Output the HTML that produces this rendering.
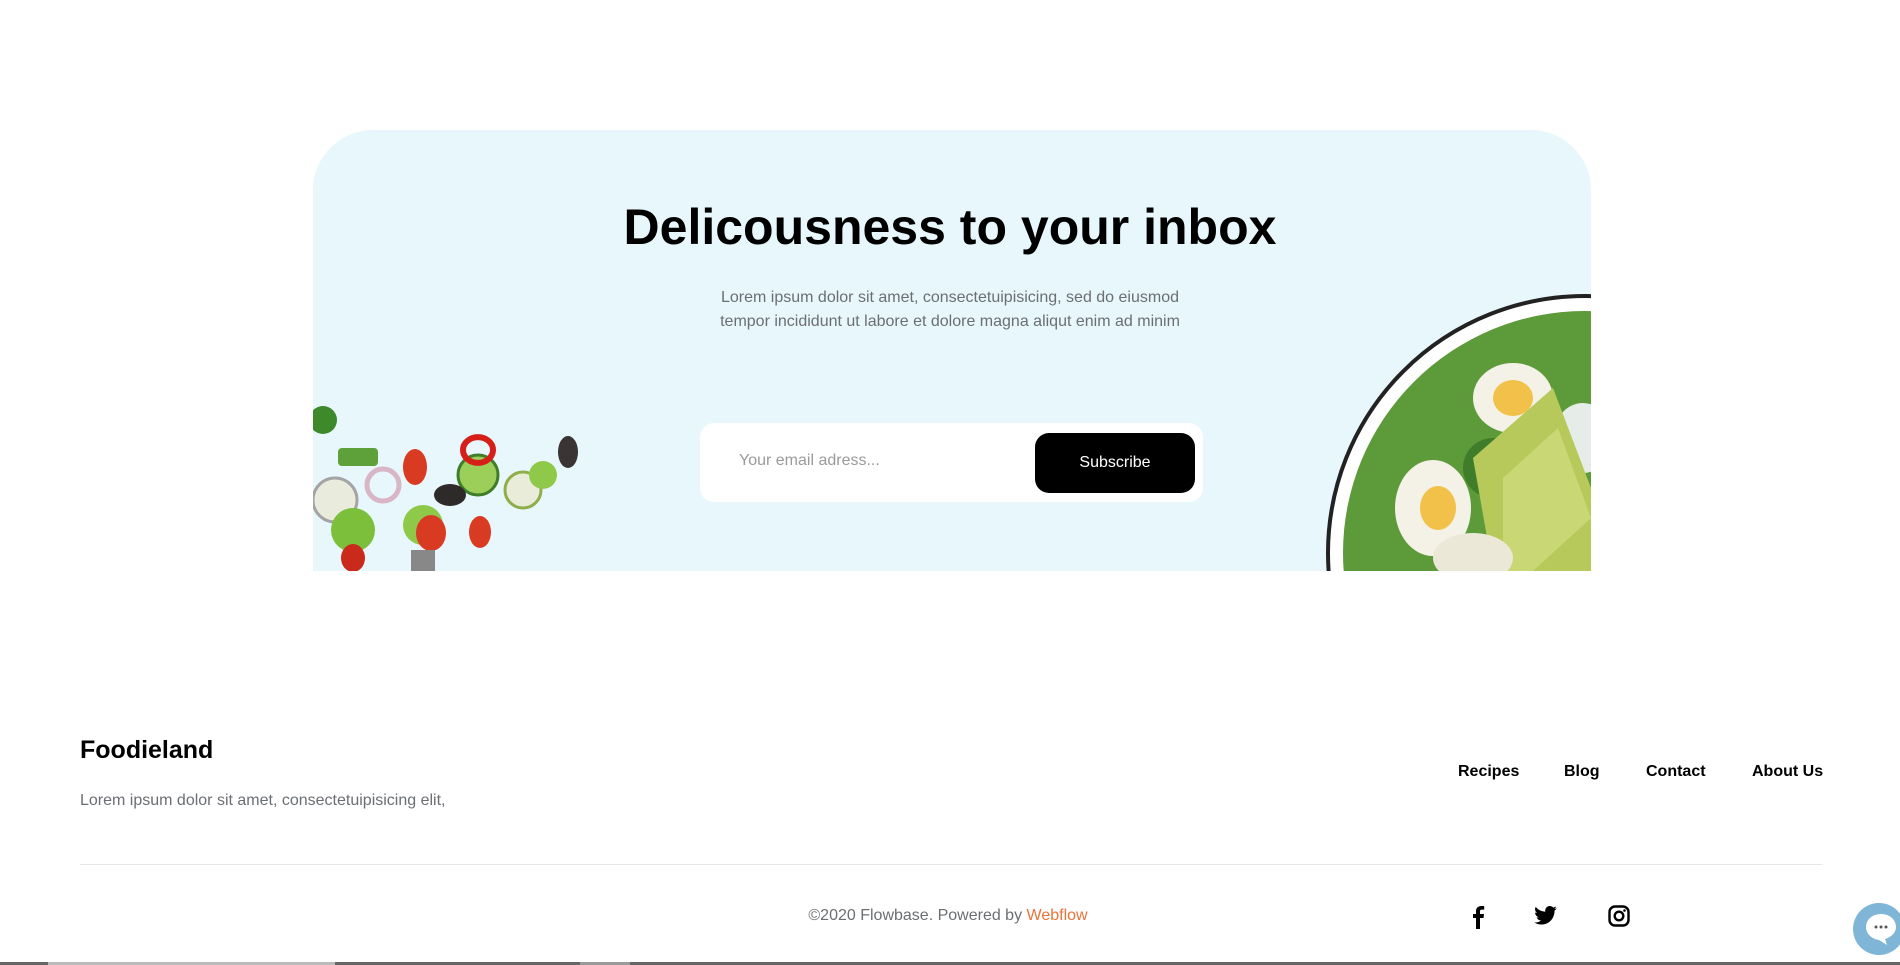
<!DOCTYPE html>
<html><head><meta charset="utf-8"><style>
*{margin:0;padding:0;box-sizing:border-box}
body{width:1900px;height:965px;background:#fff;font-family:"Liberation Sans",Arial,sans-serif;position:relative;overflow:hidden}
.card{position:absolute;left:313px;top:130px;width:1278px;height:441px;background:#e7f7fc;border-radius:60px 60px 0 0;overflow:hidden}
h1{position:absolute;left:0;right:0;top:198px;text-align:center;font-size:50px;font-weight:700;color:#000}
.p{position:absolute;left:0;right:0;top:286px;text-align:center;font-size:16px;line-height:24px;color:#6b6f73}
.form{position:absolute;left:700px;top:423px;width:503px;height:79px;background:#fff;border-radius:14px}
.ph{position:absolute;left:739px;top:452px;font-size:16px;color:#9a9a9a}
.btn{position:absolute;left:1035px;top:433px;width:160px;height:60px;background:#000;border-radius:14px;color:#fff;font-size:16px;text-align:center;line-height:60px}
.abs{position:absolute}
.nav{position:absolute;top:763px;font-size:16px;font-weight:700;color:#000}
</style></head><body>
<div class="card">
<svg width="1278" height="441" style="position:absolute;left:0;top:0">
<g>
<circle cx="1272" cy="423" r="257" fill="#fff" stroke="#222" stroke-width="4"/>
<circle cx="1272" cy="423" r="242" fill="#5c9a3a"/>
<circle cx="1180" cy="338" r="30" fill="#3f7d2a"/>
<ellipse cx="1200" cy="268" rx="40" ry="35" fill="#f4f1e6"/>
<ellipse cx="1200" cy="268" rx="20" ry="18" fill="#f2c14a"/>
<ellipse cx="1120" cy="378" rx="38" ry="48" fill="#f4f1e6"/>
<ellipse cx="1125" cy="378" rx="18" ry="22" fill="#f2c14a"/>
<ellipse cx="1270" cy="308" rx="30" ry="35" fill="#e6ece8"/>
<path d="M1160 328 L1240 258 L1278 358 L1278 441 L1180 441 Z" fill="#b7c95a"/>
<path d="M1190 348 L1245 298 L1278 388 L1220 441 L1190 441 Z" fill="#c9d874"/>
<ellipse cx="1160" cy="428" rx="40" ry="25" fill="#ebe8d8"/>
</g>
<g>
<circle cx="10" cy="290" r="14" fill="#3e8a2b"/>
<rect x="25" y="318" width="40" height="18" rx="4" fill="#5ea13a"/>
<circle cx="70" cy="355" r="16" fill="none" stroke="#d9b6c5" stroke-width="5"/>
<ellipse cx="102" cy="337" rx="12" ry="18" fill="#d93a22"/>
<circle cx="165" cy="345" r="20" fill="#9bcf5a" stroke="#3f7d2a" stroke-width="3"/>
<path d="M150 320 a14 12 0 1 1 30 0 a14 12 0 1 1 -30 0" fill="none" stroke="#d51f18" stroke-width="6"/>
<ellipse cx="137" cy="365" rx="16" ry="11" fill="#2f2a2a"/>
<ellipse cx="255" cy="322" rx="10" ry="16" fill="#3a3434"/>
<circle cx="210" cy="360" r="18" fill="#e8ecd8" stroke="#8fae4a" stroke-width="3"/>
<circle cx="230" cy="345" r="14" fill="#8fc94a"/>
<circle cx="22" cy="370" r="22" fill="#e9ecdd" stroke="#a4a4a4" stroke-width="3"/>
<circle cx="40" cy="400" r="22" fill="#7cbf3a"/>
<circle cx="110" cy="395" r="20" fill="#8fc94a"/>
<ellipse cx="118" cy="403" rx="15" ry="18" fill="#d93a22"/>
<ellipse cx="167" cy="402" rx="11" ry="16" fill="#d93a22"/>
<ellipse cx="40" cy="428" rx="12" ry="14" fill="#c92a1c"/>
<rect x="98" y="420" width="24" height="21" fill="#888"/>
</g>
</svg>
</div>
<h1>Delicousness to your inbox</h1>
<div class="p">Lorem ipsum dolor sit amet, consectetuipisicing, sed do eiusmod<br>tempor incididunt ut labore et dolore magna aliqut enim ad minim</div>
<div class="form"></div>
<div class="ph">Your email adress...</div>
<div class="btn">Subscribe</div>

<div class="abs" style="left:80px;top:736px;font-size:25px;font-weight:700">Foodieland</div>
<div class="abs" style="left:80px;top:792px;font-size:16px;color:#6b6f73">Lorem ipsum dolor sit amet, consectetuipisicing elit,</div>
<div class="nav" style="left:1458px">Recipes</div>
<div class="nav" style="left:1564px">Blog</div>
<div class="nav" style="left:1646px">Contact</div>
<div class="nav" style="left:1752px">About Us</div>
<div class="abs" style="left:80px;top:864px;width:1742px;height:1px;background:#e6e6e6"></div>
<div class="abs" style="left:0;top:907px;text-align:center;font-size:16px;color:#6b6f73;width:1896px">©2020 Flowbase. Powered by <span style="color:#e8743b">Webflow</span></div>
<svg class="abs" style="left:1470px;top:905px" width="16" height="24" viewBox="0 0 16 24"><path d="M10 24V13h3.5l.5-4H10V6.5C10 5.3 10.4 4.6 12 4.6h2.2V1.1C13.8 1 12.6 1 11.3 1 8.4 1 6 2.8 6 6v3H3v4h3v11z" fill="#000"/></svg>
<svg class="abs" style="left:1534px;top:906px" width="23" height="19" viewBox="0 0 24 20"><path d="M24 2.4a9.8 9.8 0 0 1-2.8.8A4.9 4.9 0 0 0 23.3.4a9.9 9.9 0 0 1-3.1 1.2A4.9 4.9 0 0 0 11.8 6 14 14 0 0 1 1.7.9a4.9 4.9 0 0 0 1.5 6.6A4.9 4.9 0 0 1 1 6.9a4.9 4.9 0 0 0 3.9 4.9 4.9 4.9 0 0 1-2.2.1 4.9 4.9 0 0 0 4.6 3.4A9.9 9.9 0 0 1 0 17.3 14 14 0 0 0 7.5 19.5c9.1 0 14-7.5 14-14v-.6A10 10 0 0 0 24 2.4z" fill="#000"/></svg>
<svg class="abs" style="left:1608px;top:905px" width="22" height="22" viewBox="0 0 22 22"><rect x="1.5" y="1.5" width="19" height="19" rx="5.5" fill="none" stroke="#000" stroke-width="2.4"/><circle cx="11" cy="11" r="4.3" fill="none" stroke="#000" stroke-width="2.4"/><circle cx="16.5" cy="5.5" r="1.3" fill="#000"/></svg>
<div class="abs" style="left:1853px;top:903px;width:52px;height:52px;border-radius:50%;background:#7fb6d8"></div>
<svg class="abs" style="left:1863px;top:912px" width="36" height="34" viewBox="0 0 36 34"><path d="M18 2C9 2 3 8 3 15s6 12 13 13l8 5-2-6c7-2 11-7 11-12C33 8 27 2 18 2z" fill="#fff"/><circle cx="13" cy="15" r="1.5" fill="#555"/><circle cx="18" cy="15" r="1.5" fill="#555"/><circle cx="23" cy="15" r="1.5" fill="#555"/></svg>
<div class="abs" style="left:0;top:962px;width:1900px;height:3px;background:#666"></div>
<div class="abs" style="left:48px;top:962px;width:287px;height:3px;background:#bbb"></div>
<div class="abs" style="left:580px;top:962px;width:50px;height:3px;background:#999"></div>
</body></html>
